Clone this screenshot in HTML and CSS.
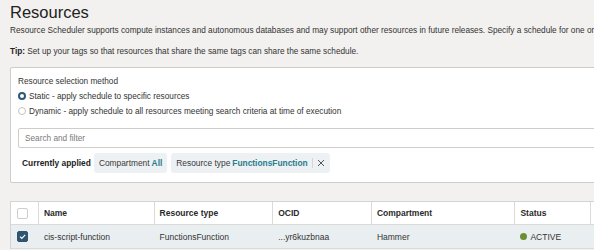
FILE: index.html
```html
<!DOCTYPE html>
<html>
<head>
<meta charset="utf-8">
<link rel="stylesheet" href="styles.css">
</head>
<body>
<div class="page">
  <h1 class="title">Resources</h1>
  <p class="desc">Resource Scheduler supports compute instances and autonomous databases and may support other resources in future releases. Specify a schedule for one or more resources.</p>
  <p class="tip"><b>Tip:</b> Set up your tags so that resources that share the same tags can share the same schedule.</p>

  <div class="panel">
    <div class="label">Resource selection method</div>
    <div class="radio-row"><span class="radio checked"></span>Static - apply schedule to specific resources</div>
    <div class="radio-row"><span class="radio"></span>Dynamic - apply schedule to all resources meeting search criteria at time of execution</div>
    <div class="search">Search and filter</div>
    <div class="applied">
      <span class="applied-label">Currently applied</span>
      <span class="chip">Compartment <span class="chip-val">All</span></span>
      <span class="chip">Resource type <span class="chip-val">FunctionsFunction</span><span class="chip-sep"></span><svg class="chip-x" width="8" height="8" viewBox="0 0 8 8"><path d="M1 1L7 7M7 1L1 7" stroke="#555" stroke-width="1" fill="none"/></svg></span>
    </div>
  </div>

  <div class="table">
    <div class="row head">
      <div class="cell c0"><span class="cb"></span></div>
      <div class="cell c1">Name</div>
      <div class="cell c2">Resource type</div>
      <div class="cell c3">OCID</div>
      <div class="cell c4">Compartment</div>
      <div class="cell c5">Status</div>
      <div class="cell c6"></div>
    </div>
    <div class="row sel">
      <div class="cell c0"><span class="cb on"><svg width="11" height="11" viewBox="0 0 11 11"><path d="M3 5.6L4.8 7.4L8.2 3.8" stroke="#fff" stroke-width="1.2" fill="none"/></svg></span></div>
      <div class="cell c1">cis-script-function</div>
      <div class="cell c2">FunctionsFunction</div>
      <div class="cell c3">...yr6kuzbnaa</div>
      <div class="cell c4">Hammer</div>
      <div class="cell c5"><span class="dot"></span>ACTIVE</div>
      <div class="cell c6"></div>
    </div>
  </div>
</div>
</body>
</html>
```

FILE: styles.css
```css
html, body {
  margin: 0;
  padding: 0;
  background: #f2f1ef;
  overflow: hidden;
}
body {
  width: 594px;
  height: 250px;
  font-family: "Liberation Sans", Arial, sans-serif;
  color: #2f2f2f;
}
.page {
  padding: 2px 0 0 10px;
  white-space: nowrap;
}
.title {
  margin: 0;
  font-size: 16.5px;
  line-height: 20px;
  font-weight: 400;
  color: #222;
}
.desc {
  margin: 3px 0 0;
  font-size: 8.25px;
  line-height: 12px;
  color: #333;
}
.tip {
  margin: 9px 0 0;
  font-size: 8.25px;
  line-height: 12px;
  color: #333;
}
.tip b { color: #222; }
.panel {
  margin-top: 9px;
  width: 640px;
  background: #fff;
  border: 1px solid #cfcdca;
  border-radius: 2px;
  padding: 8px 0 10px 7px;
  box-sizing: border-box;
  height: 116px;
}
.label {
  font-size: 8.25px;
  line-height: 12px;
  color: #333;
}
.radio-row {
  display: flex;
  align-items: center;
  height: 14px;
  font-size: 8.25px;
  color: #333;
  margin-top: 1px;
}
.radio {
  width: 8px;
  height: 8px;
  border-radius: 50%;
  border: 1px solid #c4c2bf;
  box-sizing: border-box;
  margin-right: 3px;
  background: #fff;
}
.radio.checked {
  border: 2.5px solid #2e5877;
  background: #fff;
}
.search {
  margin-top: 10px;
  height: 20px;
  border: 1px solid #cfcdca;
  border-radius: 2px;
  box-sizing: border-box;
  padding-left: 6px;
  display: flex;
  align-items: center;
  font-size: 8.25px;
  color: #7a7a7a;
  width: 620px;
}
.applied {
  margin-top: 5px;
  display: flex;
  align-items: center;
  height: 20px;
  font-size: 8.4px;
}
.applied-label {
  font-weight: 700;
  color: #222;
  margin-left: 4px;
  margin-right: 3px;
}
.chip {
  display: flex;
  align-items: center;
  height: 20px;
  padding: 0 5px;
  background: #edf1f3;
  border-radius: 3px;
  color: #3a3a3a;
  margin-right: 4px;
}
.chip-val {
  color: #2a7d8c;
  font-weight: 700;
  margin-left: 2px;
}
.chip-sep {
  width: 1px;
  height: 10px;
  background: #d3d7da;
  margin: 0 4px;
}
.chip-x { display: block; margin-right: 0; }
.table {
  margin-top: 18px;
  width: 640px;
  background: #fff;
  border-top: 1px solid #d6d4d1;
  border-left: 1px solid #d6d4d1;
}
.row {
  display: flex;
  height: 23px;
  border-bottom: 1px solid #dcdad7;
  box-sizing: border-box;
}
.row.sel { background: #e9eff1; height: 24px; }
.cell {
  display: flex;
  align-items: center;
  padding-left: 5px;
  font-size: 8.5px;
  color: #333;
  box-sizing: border-box;
  border-right: 1px solid #dcdad7;
}
.row.sel .cell { border-right-color: transparent; }
.head .cell { font-weight: 700; color: #2a2a2a; }
.c0 { width: 28px; padding-left: 6px; }
.c1 { width: 116px; }
.c2 { width: 119px; }
.c3 { width: 99px; }
.c4 { width: 144px; }
.c5 { width: 76px; }
.c6 { width: 60px; }
.cb {
  width: 11px;
  height: 11px;
  border: 1px solid #cfcdca;
  border-radius: 2px;
  box-sizing: border-box;
  background: #fff;
  display: block;
}
.cb.on {
  background: #2f5470;
  border-color: #2f5470;
  position: relative;
}
.cb.on svg { position: absolute; left: -1px; top: -1px; }
.dot {
  width: 7px;
  height: 7px;
  border-radius: 50%;
  background: #6a8f35;
  margin-right: 3px;
}
```
